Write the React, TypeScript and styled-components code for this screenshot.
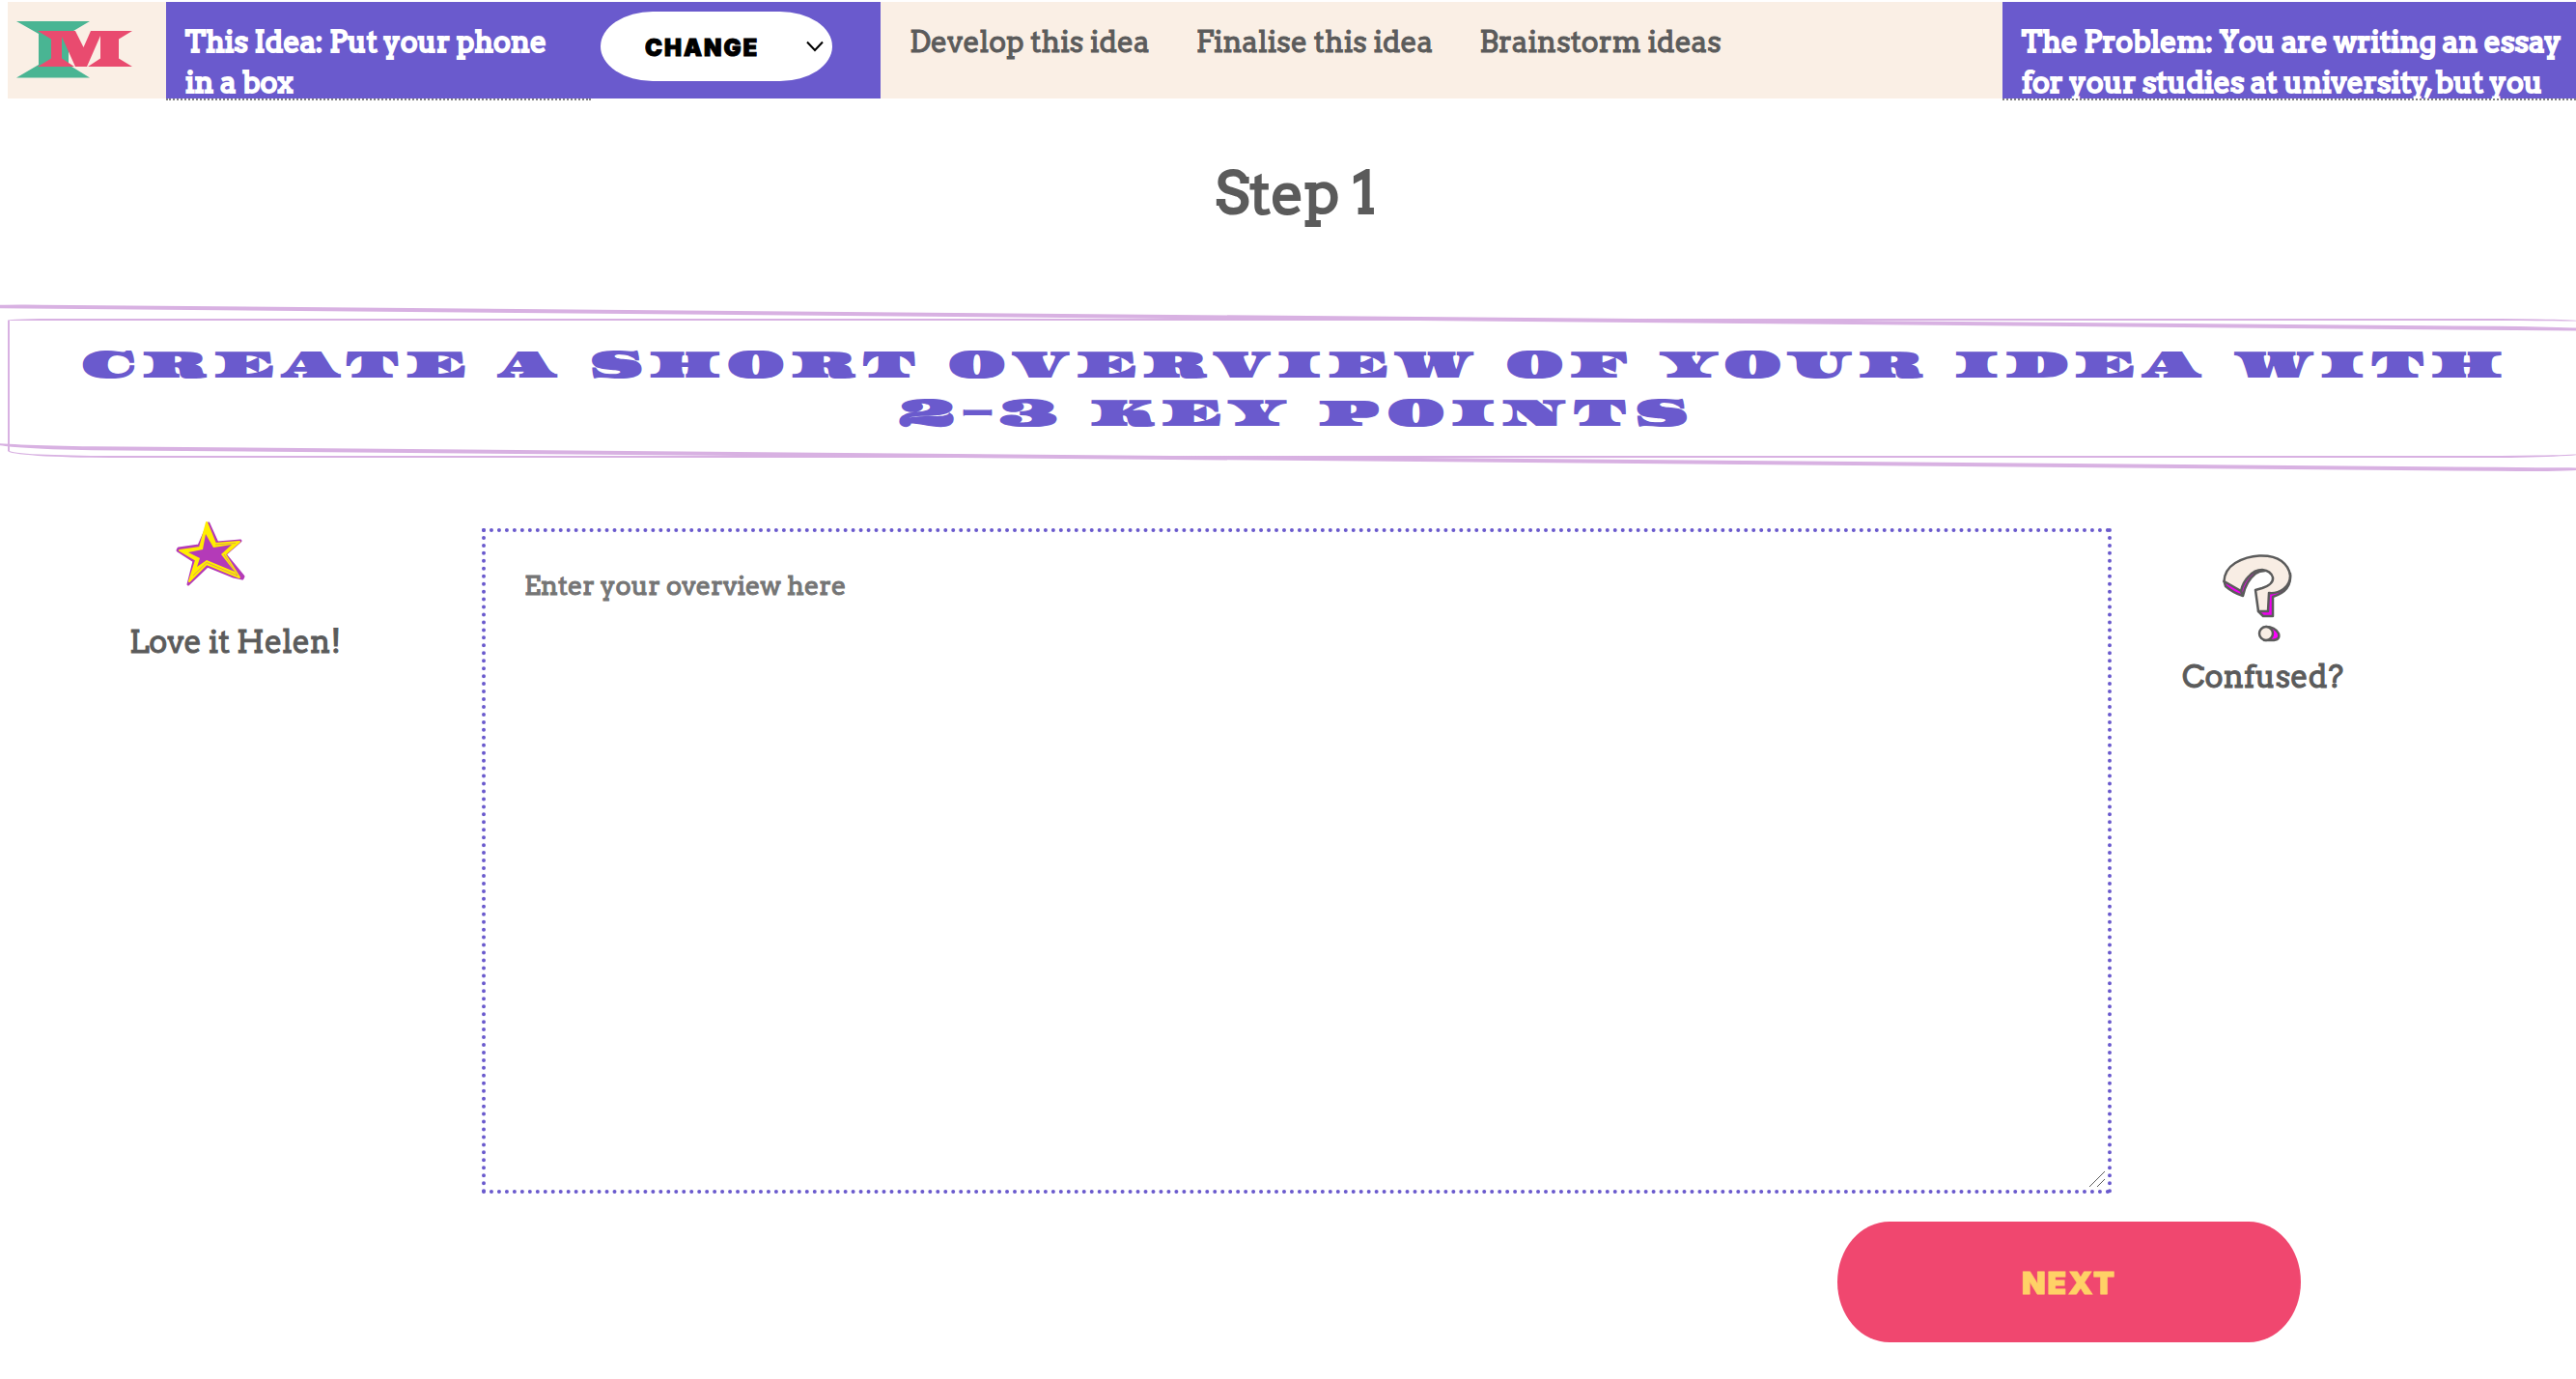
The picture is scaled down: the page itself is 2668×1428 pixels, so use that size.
import React, { useState } from "react";
import styled, { createGlobalStyle } from "styled-components";

const slab = `Arvo, "DejaVu Serif Condensed", "DejaVu Serif", serif`;
const heavy = `Inter, "Liberation Sans", sans-serif`;
const display = `Asset, "DejaVu Serif", serif`;
const purple = "#6a5acd";
const grey = "#5b5b5b";
const cream = "#faefe5";

const GlobalStyle = createGlobalStyle`
  * { box-sizing: border-box; }
  body { margin: 0; background: #fff; color: ${grey}; font-family: ${slab}; -webkit-text-stroke: 1px; }
  h1, h2, p { margin: 0; font-weight: inherit; }
`;

const Page = styled.div`
  overflow: hidden;
  padding: 2px 0 32px 8px;
`;

const Header = styled.header`
  display: flex;
  height: 100px;
  background: ${cream};
  font-size: 30px;
  line-height: 42px;
`;

const LogoLink = styled.a`
  flex: none;
  width: 164px;
  padding: 18px 0 0 8px;
  svg { display: block; }
`;

const IdeaPanel = styled.div`
  display: flex;
  flex: none;
  width: 740px;
  background: ${purple};
`;

const Summary = styled.p<{ $width: number }>`
  flex: none;
  width: ${(p) => p.$width}px;
  height: 102px;
  padding: 20px 14px 0 20px;
  overflow: hidden;
  border-bottom: 2px dotted #808080;
  background: ${purple};
  background-clip: padding-box;
  color: #fff;
  -webkit-text-stroke: 2px;
`;

const SelectWrap = styled.label`
  display: grid;
  align-items: center;
  width: 240px;
  height: 72px;
  margin: 10px 0 0 10px;
  > * { grid-area: 1 / 1; }
  svg { justify-self: end; margin-right: 8px; pointer-events: none; }
`;

const Select = styled.select`
  appearance: none;
  width: 100%;
  height: 100%;
  padding: 2px 46px 0;
  border: 0;
  border-radius: 54px / 50%;
  background: #fff;
  color: #000;
  font: 900 24px ${heavy};
  letter-spacing: 2px;
`;

const Nav = styled.nav`
  display: flex;
  flex: 1;
  gap: 48px;
  padding: 20px 30px 0;
`;

const NavLink = styled.a`
  color: ${grey};
  text-decoration: none;
  white-space: nowrap;
`;

const Content = styled.div`
  margin-right: -8px;
`;

const StepTitle = styled.h2`
  padding: 56px 0 80px;
  font-size: 60px;
  line-height: 84px;
  text-align: center;
  -webkit-text-stroke: 2px;
`;

const Banner = styled.h1`
  position: relative;
  padding: 22px 40px;
  margin-top: 8px;
  color: ${purple};
  font: 40px/50px ${display};
  letter-spacing: 8px;
  text-align: center;
  text-transform: uppercase;
  -webkit-text-stroke: 2px;

  &::before,
  &::after {
    content: "";
    position: absolute;
    inset: 0;
    border: 2px solid #d8b1e2;
    border-radius: 2% 4% 4% 4% / 1% 2% 3% 5%;
  }
  &::after {
    inset: -3px -20px;
    border-width: 4px;
    transform: rotate(0.5deg);
  }
`;

const Work = styled.main`
  display: grid;
  grid-template-columns: 491px 1fr 489px;
  margin-top: 64px;
`;

const Aside = styled.aside<{ $top: number; $left: number; $indent: number; $gap: number }>`
  display: flex;
  flex-direction: column;
  gap: ${(p) => p.$gap}px;
  padding: ${(p) => p.$top}px 0 0 ${(p) => p.$left}px;
  font-size: 32px;
  line-height: 42px;
  svg { display: block; margin-left: ${(p) => p.$indent}px; overflow: visible; }
`;

const Field = styled.div`
  position: relative;
  margin-top: 9px;
`;

const Overview = styled.textarea`
  display: block;
  width: 100%;
  height: 689px;
  padding: 38px 40px;
  border: 4px dotted ${purple};
  background: #fff;
  color: ${grey};
  font: 27px/36px ${slab};
  -webkit-text-stroke: 1px;
  &::placeholder { color: #757575; }
  &::-webkit-resizer { background: transparent; }
`;

const Grip = styled.svg`
  position: absolute;
  right: 6px;
  bottom: 6px;
  pointer-events: none;
`;

const Actions = styled.div`
  display: flex;
  justify-content: flex-end;
  padding: 29px 293px 0 0;
`;

const NextButton = styled.button`
  width: 480px;
  height: 125px;
  padding: 2px 0 0;
  border: 0;
  border-radius: 54px / 50%;
  background: #f0476f;
  color: #ffd166;
  font: 900 32px ${heavy};
  letter-spacing: 2px;
  -webkit-text-stroke: 1px;
`;

const Logo = () => (
  <svg width="122" height="62" viewBox="16 20 122 62" aria-hidden="true">
    <path fill="#49b593" d="M17 22H93L71 35V67L93 80.500H17L40 67V35Z" />
    <path
      fill="#e94b6f"
      d="M39 32H78L86.500 49L94 32H137L123 40.500V60.500L137 69H91L104 60.500V37L90 69H78L64 38V60.500L77 69H39L53 60.500V40.500Z"
    />
  </svg>
);

const Chevron = () => (
  <svg width="20" height="12" viewBox="0 0 20 12" fill="none" stroke="#000" strokeWidth="2" aria-hidden="true">
    <path d="M2 1.500L10 10L18 1.500" />
  </svg>
);

const Star = () => (
  <svg width="72" height="68" viewBox="0 0 72 68" aria-hidden="true">
    <g strokeLinejoin="round">
      <path
        fill="#b43ab8"
        stroke="#b43ab8"
        strokeWidth="3"
        d="M34 2L43 22L67 20L51 34L70 57L69 59L60 57L33 46L13 65L19 41L2 30L3 28L24 25Z"
      />
      <path fill="#ffee00" stroke="#ffee00" strokeWidth="2" d="M32 1L41 23L66 21L51 34L66 58L32 44L14 62L21 40L4 30L25 27Z" />
      <path fill="none" stroke="#b43ab8" strokeOpacity="0.4" strokeWidth="1" d="M41 24L62 22.500M50 34L64 56L32 42.500L18 56" />
      <path fill="#b43ab8" d="M31 13L39 27L58 24L47 34L61 52L32 40L22 47L25 38L13 32L28 29Z" />
    </g>
  </svg>
);

const Question = () => (
  <svg width="72" height="91" viewBox="0 0 72 91" aria-hidden="true">
    <g stroke="#5b5b5b" strokeWidth="2.500" strokeLinejoin="round">
      <path
        fill="#ee00ee"
        d="M1.500 28L3 33Q11 40 21 43Q24 28 34 20Q38 17 44 17L36 15L18 20L10 28Z"
      />
      <path fill="#ee00ee" d="M48 40L54 36L70 20Q72 38 52 44L52 64H42L37 59Z" />
      <path
        fill="#f8ede4"
        d="M1.500 28Q2 16 13 9Q25 2 38 1.500Q53 1 61 7Q69 13 70 22Q70 31 63 36Q56 41 48 40L47 59H37L34 37L41 35Q53 31 52 24Q50 17 41 16Q33 16 27 23Q21 29 19 38Z"
      />
      <path fill="none" d="M19 38L21 43" />
      <path fill="#ff00ff" d="M45 75Q54 75 58 82Q60 89 51 89H43Z" />
      <ellipse fill="#f8ede4" cx="45" cy="82" rx="7" ry="7" />
    </g>
  </svg>
);

export default function App() {
  const [overview, setOverview] = useState("");
  return (
    <>
      <GlobalStyle />
      <Page>
        <Header>
          <LogoLink href="#" aria-label="Home">
            <Logo />
          </LogoLink>
          <IdeaPanel>
            <Summary $width={440}>This Idea: Put your phone in a box</Summary>
            <SelectWrap>
              <Select aria-label="Change idea">
                <option>CHANGE</option>
              </Select>
              <Chevron />
            </SelectWrap>
          </IdeaPanel>
          <Nav>
            <NavLink href="#">Develop this idea</NavLink>
            <NavLink href="#">Finalise this idea</NavLink>
            <NavLink href="#">Brainstorm ideas</NavLink>
          </Nav>
          <Summary $width={594}>
            The Problem: You are writing an essay for your studies at university, but you
          </Summary>
        </Header>
        <Content>
          <StepTitle>Step 1</StepTitle>
          <Banner>Create a short overview of your idea with 2-3 key points</Banner>
          <Work>
            <Aside $top={2} $left={126} $indent={48} $gap={36}>
              <Star />
              <p>Love it Helen!</p>
            </Aside>
            <Field>
              <Overview
                aria-label="Overview"
                placeholder="Enter your overview here"
                value={overview}
                onChange={(e) => setOverview(e.target.value)}
              />
              <Grip width="18" height="18" viewBox="0 0 18 18" stroke="#5b5b5b" aria-hidden="true">
                <path d="M1 17L17 1M9 17L17 9" />
              </Grip>
            </Field>
            <Aside $top={36} $left={73} $indent={42} $gap={15}>
              <Question />
              <p>Confused?</p>
            </Aside>
          </Work>
          <Actions>
            <NextButton type="button">NEXT</NextButton>
          </Actions>
        </Content>
      </Page>
    </>
  );
}
